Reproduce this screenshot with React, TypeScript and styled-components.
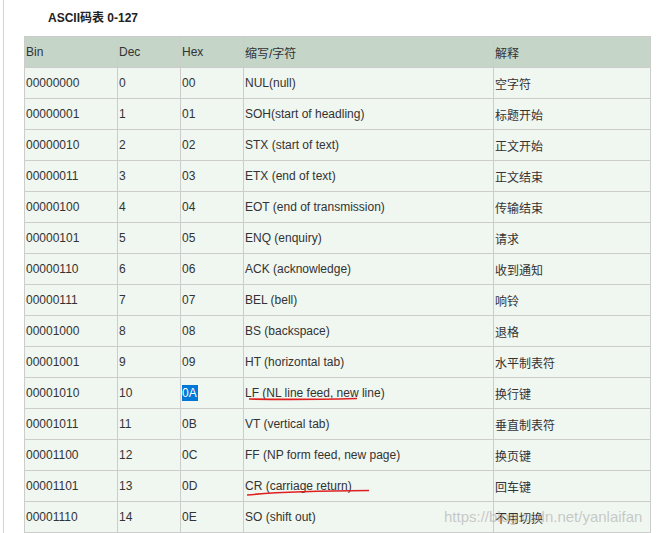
import React from "react";
import styled, { createGlobalStyle } from "styled-components";

const Global = createGlobalStyle`
  html, body { margin: 0; padding: 0; background: #fff; overflow: hidden; }
  body { font-family: Arial, "Liberation Sans", "Noto Sans CJK SC", sans-serif; }
`;

const Page = styled.div`
  position: relative;
  height: 533px;
  margin-left: 3px;
  border-left: 1px solid #d4d4d4;
  padding-left: 20px;
`;

const Title = styled.h3`
  margin: 0;
  padding: 8px 0 0 24px;
  height: 36px;
  box-sizing: border-box;
  font-size: 12px;
  font-weight: bold;
  color: #222;
`;

const Table = styled.table`
  border-collapse: collapse;
  table-layout: fixed;
  width: 626px;
  font-size: 12px;
  color: #333;
`;

const Col = styled.col<{ w: number }>`
  width: ${(p) => p.w}px;
`;

const Th = styled.th`
  height: 30px;
  background: #c5d5c8;
  border: 1px solid #cccccc;
  text-align: left;
  font-weight: normal;
  padding: 0 0 0 1px;
`;

const Td = styled.td`
  height: 30px;
  background: #f0f6f0;
  border: 1px solid #cccccc;
  padding: 0 0 0 1px;
  white-space: nowrap;
  position: relative;
`;

const Sel = styled.span`
  background: #0078d7;
  color: #fff;
  padding: 1px 1px 1px 0;
`;

const Mark = styled.svg`
  position: absolute;
  left: 3px;
  top: 19px;
  overflow: visible;
`;

const Watermark = styled.div`
  position: absolute;
  left: 440px;
  top: 508px;
  font-size: 15px;
  color: rgba(170, 170, 170, 0.6);
  font-family: Arial, "Liberation Sans", sans-serif;
`;

const rows: [string, string, string, string, string][] = [
  ["00000000", "0", "00", "NUL(null)", "空字符"],
  ["00000001", "1", "01", "SOH(start of headling)", "标题开始"],
  ["00000010", "2", "02", "STX (start of text)", "正文开始"],
  ["00000011", "3", "03", "ETX (end of text)", "正文结束"],
  ["00000100", "4", "04", "EOT (end of transmission)", "传输结束"],
  ["00000101", "5", "05", "ENQ (enquiry)", "请求"],
  ["00000110", "6", "06", "ACK (acknowledge)", "收到通知"],
  ["00000111", "7", "07", "BEL (bell)", "响铃"],
  ["00001000", "8", "08", "BS (backspace)", "退格"],
  ["00001001", "9", "09", "HT (horizontal tab)", "水平制表符"],
  ["00001010", "10", "0A", "LF (NL line feed, new line)", "换行键"],
  ["00001011", "11", "0B", "VT (vertical tab)", "垂直制表符"],
  ["00001100", "12", "0C", "FF (NP form feed, new page)", "换页键"],
  ["00001101", "13", "0D", "CR (carriage return)", "回车键"],
  ["00001110", "14", "0E", "SO (shift out)", "不用切换"],
];

export default function App() {
  return (
    <Page>
      <Global />
      <Title>ASCII码表 0-127</Title>
      <Table>
        <colgroup>
          <Col w={93} />
          <Col w={63} />
          <Col w={63} />
          <Col w={250} />
          <Col w={157} />
        </colgroup>
        <thead>
          <tr>
            <Th>Bin</Th>
            <Th>Dec</Th>
            <Th>Hex</Th>
            <Th>缩写/字符</Th>
            <Th>解释</Th>
          </tr>
        </thead>
        <tbody>
          {rows.map((r) => (
            <tr key={r[0]}>
              <Td>{r[0]}</Td>
              <Td>{r[1]}</Td>
              <Td>{r[2] === "0A" ? <Sel>0A</Sel> : r[2]}</Td>
              <Td>
                {r[3]}
                {r[2] === "0A" && (
                  <Mark width="110" height="4">
                    <path d="M2 2 Q50 3 110 1.5" stroke="#e02020" strokeWidth="1.6" fill="none" />
                  </Mark>
                )}
                {r[2] === "0D" && (
                  <Mark width="122" height="6">
                    <path d="M0 5 Q40 1 122 0.5" stroke="#e02020" strokeWidth="1.6" fill="none" />
                  </Mark>
                )}
              </Td>
              <Td>{r[4]}</Td>
            </tr>
          ))}
        </tbody>
      </Table>
      <Watermark>https://blog.csdn.net/yanlaifan</Watermark>
    </Page>
  );
}
